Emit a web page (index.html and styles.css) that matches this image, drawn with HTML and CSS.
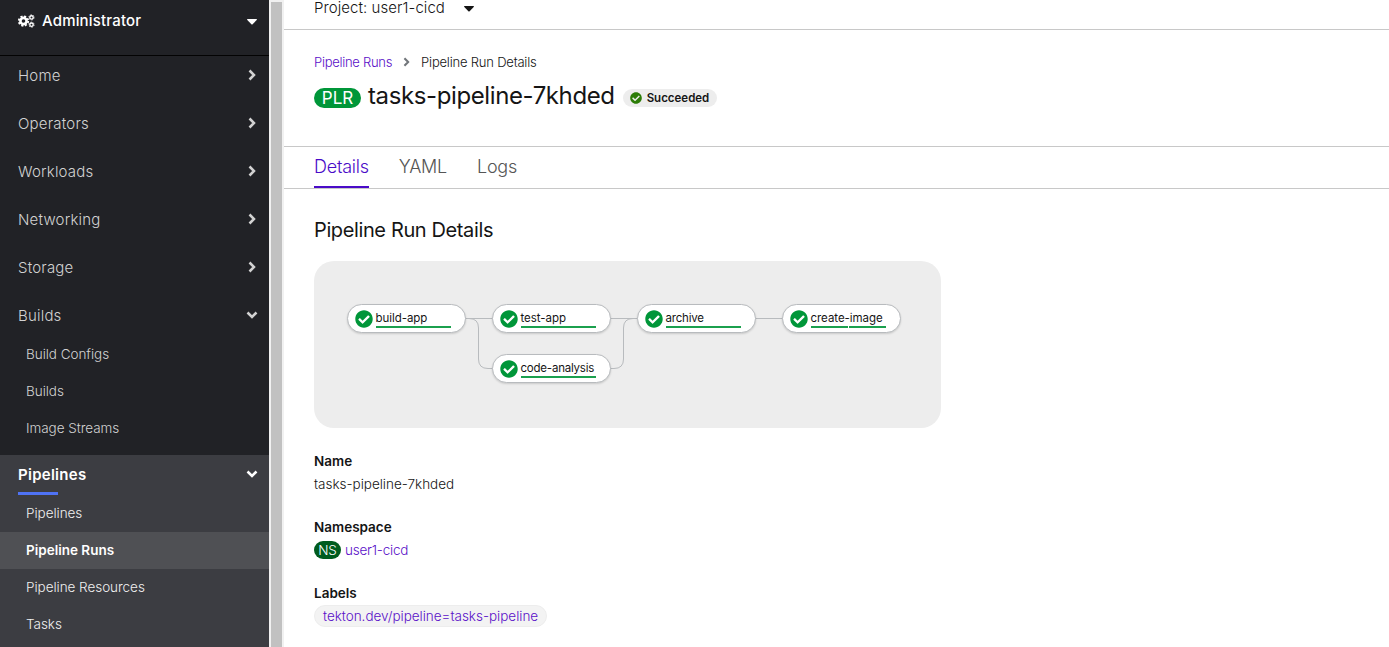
FILE: index.html
```html
<!DOCTYPE html>
<html lang="en">
<head>
<meta charset="utf-8">
<title>Pipeline Run Details</title>
<link rel="stylesheet" href="styles.css">
</head>
<body>
<svg class="defs" width="0" height="0">
  <symbol id="right" viewBox="0 0 8 12"><path d="M1.5 1.5 6 6l-4.500 4.500" fill="none" stroke="currentColor" stroke-width="2.500"/></symbol>
  <symbol id="down" viewBox="0 0 12 8"><path d="M1.500 1.500 6 6l4.500-4.500" fill="none" stroke="currentColor" stroke-width="2.500"/></symbol>
  <symbol id="caret" viewBox="0 0 10 6"><path d="M.5 0h9q.7.300.2 1L5.600 5.200q-.6.500-1.200 0L.3 1Q-.2.300.5 0z" fill="currentColor"/></symbol>
  <symbol id="check" viewBox="0 0 512 512"><path fill="currentColor" d="M504 256c0 136.967-111.033 248-248 248S8 392.967 8 256 119.033 8 256 8s248 111.033 248 248zM227.314 387.314l184-184c6.248-6.248 6.248-16.379 0-22.627l-22.627-22.627c-6.248-6.249-16.379-6.249-22.628 0L216 308.118l-70.059-70.059c-6.248-6.248-16.379-6.248-22.628 0l-22.627 22.627c-6.248 6.248-6.248 16.379 0 22.627l104 104c6.249 6.249 16.379 6.249 22.628.001z"/></symbol>
</svg>
<div class="app">
  <nav class="sidebar">
    <div class="perspective">
      <svg class="cogs" viewBox="0 0 17 14"><g fill="none" stroke="currentColor"><circle cx="5.500" cy="7" r="3.100" stroke-width="2.600"/><circle cx="5.500" cy="7" r="4.700" stroke-width="1.900" stroke-dasharray="2.100 1.591"/><circle cx="13.500" cy="3.400" r="1.700" stroke-width="1.400"/><circle cx="13.500" cy="3.400" r="2.600" stroke-width=".9" stroke-dasharray="1.300 1.423"/><circle cx="13.500" cy="10.700" r="1.700" stroke-width="1.400"/><circle cx="13.500" cy="10.700" r="2.600" stroke-width=".9" stroke-dasharray="1.300 1.423"/></g></svg>
      <span class="perspective-name">Administrator</span>
      <svg class="caret"><use href="#caret"/></svg>
    </div>
    <div class="section"><span>Home</span><svg class="right"><use href="#right"/></svg></div>
    <div class="section"><span>Operators</span><svg class="right"><use href="#right"/></svg></div>
    <div class="section"><span>Workloads</span><svg class="right"><use href="#right"/></svg></div>
    <div class="section"><span>Networking</span><svg class="right"><use href="#right"/></svg></div>
    <div class="section"><span>Storage</span><svg class="right"><use href="#right"/></svg></div>
    <div class="section"><span>Builds</span><svg class="down"><use href="#down"/></svg></div>
    <div class="item"><span>Build Configs</span></div>
    <div class="item"><span>Builds</span></div>
    <div class="item"><span>Image Streams</span></div>
    <div class="group">
      <div class="section current"><span>Pipelines</span><svg class="down"><use href="#down"/></svg></div>
      <div class="marker"></div>
      <div class="item"><span>Pipelines</span></div>
      <div class="item active"><span>Pipeline Runs</span></div>
      <div class="item"><span>Pipeline Resources</span></div>
      <div class="item"><span>Tasks</span></div>
    </div>
  </nav>
  <div class="scrollbar"></div>
  <main class="main">
    <div class="project"><span>Project: user1-cicd</span><svg class="caret"><use href="#caret"/></svg></div>
    <header class="heading">
      <div class="crumbs"><a>Pipeline Runs</a><svg class="sep" viewBox="0 0 8 12"><use href="#right"/></svg><span>Pipeline Run Details</span></div>
      <div class="title"><span class="plr">PLR</span><h1>tasks-pipeline-7khded</h1><span class="status"><svg><use href="#check"/></svg><span>Succeeded</span></span></div>
    </header>
    <div class="tabs"><span class="tab selected">Details</span><span class="tab">YAML</span><span class="tab">Logs</span></div>
    <section class="details">
      <h2>Pipeline Run Details</h2>
      <div class="graph">
        <svg class="links" viewBox="0 0 627 167"><g fill="none" stroke="#b8bbbe"><path d="M150 57.500h30M295 57.500h30M440 57.500h30"/><path d="M150 57.500h5q9.500 0 9.500 9.500v31q0 9.500 9.500 9.500h6"/><path d="M295 107.500h5q9.500 0 9.500-9.500V67q0-9.500 9.500-9.500h6"/></g></svg>
        <div class="node n1"><svg><use href="#check"/></svg><span>build-app</span></div>
        <div class="node n2"><svg><use href="#check"/></svg><span>test-app</span></div>
        <div class="node n3"><svg><use href="#check"/></svg><span>code-analysis</span></div>
        <div class="node n4"><svg><use href="#check"/></svg><span>archive</span></div>
        <div class="node n5"><svg><use href="#check"/></svg><span>create-image</span></div>
      </div>
      <dl>
        <dt>Name</dt><dd><span>tasks-pipeline-7khded</span></dd>
        <dt>Namespace</dt><dd><span class="ns">NS</span><a class="namespace">user1-cicd</a></dd>
        <dt>Labels</dt><dd><a class="label">tekton.dev/pipeline=tasks-pipeline</a></dd>
      </dl>
    </section>
  </main>
</div>
</body>
</html>
```
FILE: styles.css
```css
* { box-sizing: border-box; }
body { margin: 0; font-family: Inter, "Open Sans", sans-serif; color: #151515; background: #fff; }
.defs { display: none; }
svg { flex: none; display: block; }
.app { display: flex; height: 647px; overflow: hidden; white-space: nowrap; }
.sidebar { width: 269px; flex: none; background: #212226; color: #d2d2d2; font-weight: 350; }
.perspective { height: 56px; padding: 0 12px 14px 18px; display: flex; align-items: center; border-bottom: 1px solid #030303; color: #fff; font-size: 15px; font-weight: 500; letter-spacing: .18px; }
.perspective-name { margin-left: 7px; }
.cogs { width: 17px; height: 14px; }
.caret { width: 10px; height: 6px; }
.sidebar .caret { margin: 2px 0 0 auto; }
.section { height: 48px; padding: 0 13px 10px 18px; display: flex; align-items: center; justify-content: space-between; font-size: 15px; letter-spacing: .2px; }
.right { width: 8px; height: 12px; }
.down { width: 12px; height: 8px; margin-right: -2px; }
.item { height: 37px; padding: 0 0 2px 26px; display: flex; align-items: center; font-size: 13.500px; letter-spacing: -.04px; }
.section + .item { margin-top: -8px; }
.group { margin-top: 8px; background: #3c3d42; height: 200px; color: #f0f0f0; }
.section.current { height: 37px; padding-bottom: 0; color: #fff; font-weight: 600; letter-spacing: .27px; }
.section.current span { padding-top: 2px; }
.marker { width: 40px; height: 3px; background: #4f73f5; margin: 0 0 0 18px; }
.item.active { background: #4f5054; color: #fff; font-weight: 600; letter-spacing: 0; }
.scrollbar { width: 15px; flex: none; background: #c1c1c1; border: solid #f1f1f1; border-width: 2px 2px 0; }
.main { flex: 1; }
.project { height: 30px; padding: 0 30px 14px; display: flex; align-items: center; gap: 19px; border-bottom: 1px solid #c8c8c8; font-size: 15px; line-height: 15px; font-weight: 350; letter-spacing: .07px; }
.project .caret { margin-top: 2px; }
.heading { height: 117px; padding: 21px 30px 0; border-bottom: 1px solid #c8c8c8; }
a { color: #5a0fc8; }
.crumbs { display: flex; align-items: center; height: 21px; font-size: 13px; letter-spacing: -.2px; font-weight: 350; }
.crumbs a { letter-spacing: -.28px; }
.sep { width: 7px; height: 10px; margin: 0 11px; color: #72767b; }
.title { display: flex; align-items: center; height: 46px; }
h1 { margin: 0 0 0 7px; font-size: 24px; font-weight: 400; letter-spacing: -.39px; }
.plr { width: 47px; height: 20px; border-radius: 10px; background: #009639; color: #fff; font-size: 17px; line-height: 20px; text-align: center; margin-top: 5px; }
.status { height: 18px; border-radius: 9px; background: #ededed; margin: 5px 0 0 8px; padding: 0 8px 0 7px; display: flex; align-items: center; gap: 5px; font-size: 11.500px; font-weight: 600; }
.status svg { width: 12px; height: 12px; color: #2d7d08; }
.tabs { height: 42px; padding-left: 30px; display: flex; border-bottom: 1px solid #c8c8c8; font-size: 18px; letter-spacing: -.24px; color: #555; font-weight: 350; }
.tab { height: 41px; line-height: 40px; margin-right: 30px; }
.selected { color: #4a0bc8; border-bottom: 2px solid #4a0bc8; }
.details { padding: 26px 30px 0; }
h2 { margin: 0; height: 46px; line-height: 31px; font-size: 20px; font-weight: 400; letter-spacing: -.38px; }
.graph { position: relative; width: 627px; height: 167px; border-radius: 20px; background: #ededed; }
.links { width: 627px; height: 167px; }
.node { position: absolute; width: 119px; height: 29px; border: 1px solid #b8bbbe; border-radius: 15px; background: #fff; box-shadow: 0 1px 2px rgba(3,3,3,.15); display: flex; align-items: center; padding-left: 6.500px; gap: 3px; font-size: 11.500px; letter-spacing: -.05px; }
.node svg { width: 18px; height: 18px; color: #009639; }
.node span { width: 75px; height: 19px; line-height: 18px; border-bottom: 2px solid #1ba04e; }
.n1 { left: 33px; top: 43px; }
.n2 { left: 178px; top: 43px; }
.n3 { left: 178px; top: 93px; letter-spacing: -.22px; }
.n4 { left: 323px; top: 43px; letter-spacing: -.2px; }
.n5 { left: 468px; top: 43px; }
/* break between the two step segments */
.n5::after { content: ""; position: absolute; left: 65px; bottom: 4px; width: 1px; height: 2px; background: #fff; }
dl { margin: 22px 0 0; font-size: 13.500px; letter-spacing: -.02px; }
dt { height: 23px; line-height: 23px; font-weight: 600; letter-spacing: 0; }
dd { height: 23px; margin: 0 0 20px; padding-bottom: 2px; display: flex; align-items: center; font-weight: 350; }
.ns { width: 27px; height: 18px; border-radius: 9px; background: #005c1f; color: #fff; line-height: 18px; text-align: center; margin-right: 4px; }
.namespace { letter-spacing: -.22px; }
.label { height: 22px; line-height: 20px; border: 1px solid #ededed; border-radius: 11px; background: #f3f3f3; padding: 0 8px; }
```
